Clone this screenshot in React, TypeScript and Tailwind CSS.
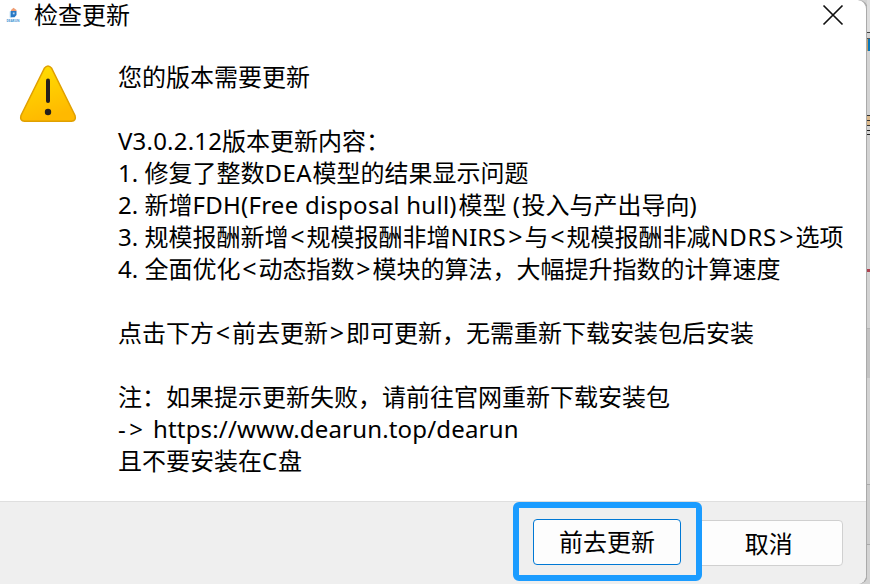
import type { ReactNode } from 'react';

const Latin = ({ w, children }: { w: string; children: ReactNode }) => (
  <span className={`inline-block whitespace-pre ${w}`}>{children}</span>
);

const Line = ({ children }: { children?: ReactNode }) => (
  <p className="h-8 whitespace-pre leading-8">{children}</p>
);

const Lt = () => <Latin w="w-[18px] text-center text-[25px] leading-none">&lt;</Latin>;
const Gt = () => <Latin w="w-[18px] text-center text-[25px] leading-none">&gt;</Latin>;

const AppLogo = () => (
  <svg width="16" height="16" viewBox="0 0 16 16" className="shrink-0 overflow-visible">
    <path d="M3.800 4.500L5.500 3.500v7H3.800z" fill="#8cc4ec" />
    <path d="M5 3L7.500.8l3 2.200v1H5z" fill="#ef9d73" />
    <path d="M5 4h5.500v4L8.500 10.300H5z" fill="#2878c4" />
    <path d="M6.800 5.500h1.800v1.800H6.800z" fill="#b9daf4" />
    <text x="0.500" y="15" textLength="13" lengthAdjust="spacingAndGlyphs" fontSize="4.200" fontWeight="700" fill="#3d91d2">DEARUN</text>
  </svg>
);

const WarningIcon = () => (
  <svg width="58" height="58" viewBox="0 0 58 58" className="block">
    <defs>
      <linearGradient id="warn" x1="0" y1="0" x2="0.3" y2="1">
        <stop offset="0" stopColor="#ffe100" />
        <stop offset="1" stopColor="#ffb900" />
      </linearGradient>
    </defs>
    <path d="M25.300 3.300Q29 -1.200 32.700 3.300L56 50.500Q57.500 56 52.500 56.300H5.500Q.5 56 2 50.500Z" fill="url(#warn)" stroke="#e0a000" strokeWidth="1.500" />
    <path d="M29 15.500V36" stroke="#241f1c" strokeWidth="4" strokeLinecap="round" />
    <circle cx="29" cy="47" r="3.200" fill="#241f1c" />
  </svg>
);

const Backdrop = () => (
  <div className="flex w-[3px] shrink-0 flex-col bg-[#d3d3d3]">
    <div className="h-8 bg-[#dedede]" />
    <div className="h-px bg-[#444]" />
    <div className="h-[5px]" />
    <div className="h-px bg-[#555]" />
    <div className="h-3 border-l border-[#c29a63] bg-[#0877b9]" />
    <div className="h-[64px]" />
    <div className="flex h-[11px] flex-col justify-center border-y border-[#333] bg-[#dbb98c]"><div className="h-px bg-[#333]" /></div>
    <div className="h-1" />
    <div className="h-px bg-[#222]" />
    <div className="h-[3px]" />
    <div className="h-px bg-[#222]" />
    <div className="h-[134px]" />
    <div className="h-[3px] bg-[#ad4250]" />
    <div className="h-[56px]" />
    <div className="h-px bg-[#b5b5b5]" />
    <div className="h-[49px] bg-[#c3c3c3]" />
    <div className="h-[106px]" />
    <div className="h-px bg-[#aaa]" />
    <div className="h-[59px] bg-[#cdcdcd]" />
    <div className="h-px bg-[#aaa]" />
  </div>
);

export default function App() {
  return (
    <div className="flex h-[584px] w-[870px] overflow-hidden bg-[#d3d3d3] font-['Noto_Sans','Noto_Sans_CJK_SC',sans-serif] text-2xl text-black">
      <div className="flex w-[867px] shrink-0 flex-col overflow-hidden rounded-r-[9px] border-r border-[#aaa] bg-white shadow-[1px_0_0_#aaa]">
        <header className="flex h-[30px] shrink-0 items-center pl-[6px] pr-[22px]">
          <AppLogo />
          <h1 className="ml-3 flex-1 leading-[30px]">检查更新</h1>
          <svg width="22" height="22" viewBox="0 0 22 22"><path d="M1.500 1.500l19 19M20.500 1.500l-19 19" stroke="#111" strokeWidth="1.700" /></svg>
        </header>
        <main className="flex h-[471px] shrink-0 pt-[31px]">
          <div className="w-[118px] shrink-0 pl-[19px] pt-[4px]"><WarningIcon /></div>
          <div>
            <Line>您的版本需要更新</Line>
            <Line />
            <Line><Latin w="w-[104px] tracking-[0.2px]">V3.0.2.12</Latin>版本更新内容：</Line>
            <Line><Latin w="w-[26.500px]">1. </Latin>修复了整数<Latin w="w-[48px] tracking-[0.5px]">DEA</Latin>模型的结果显示问题</Line>
            <Line><Latin w="w-[26.500px]">2. </Latin>新增<Latin w="w-[266px] tracking-[0.25px]">FDH(Free disposal hull)</Latin>模型<Latin w="w-[15px]"> (</Latin>投入与产出导向)</Line>
            <Line><Latin w="w-[26.500px]">3. </Latin>规模报酬新增<Lt />规模报酬非增<Latin w="w-[56px] tracking-[0.2px]">NIRS</Latin><Gt />与<Lt />规模报酬非减<Latin w="w-[67px] tracking-[0.6px]">NDRS</Latin><Gt />选项</Line>
            <Line><Latin w="w-[26.500px]">4. </Latin>全面优化<Lt />动态指数<Gt />模块的算法，大幅提升指数的计算速度</Line>
            <Line />
            <Line>点击下方<Lt />前去更新<Gt />即可更新，无需重新下载安装包后安装</Line>
            <Line />
            <Line>注：如果提示更新失败，请前往官网重新下载安装包</Line>
            <Line><Latin w="w-[35px] tracking-[3.500px]">-&gt;</Latin><span className="tracking-[0.17px]">https://www.dearun.top/dearun</span></Line>
            <Line>且不要安装在<Latin w="w-[16px]">C</Latin>盘</Line>
          </div>
        </main>
        <footer className="flex flex-1 items-start border-t border-[#dfdfdf] bg-[#efefef] pl-[512.500px]">
          <div className="z-10 flex h-[79px] w-[189px] shrink-0 items-center justify-center rounded-md border-[6px] border-[#1b9cff] pt-px">
            <button className="h-[46px] w-[148px] rounded border border-[#0078d4] bg-[#fdfdfd]">前去更新</button>
          </div>
          <button className="-ml-1 mt-[18px] h-[46px] w-[145.500px] rounded-r border border-[#d0d0d0] bg-[#fdfdfd] pr-[3px] pt-px">取消</button>
        </footer>
      </div>
      <Backdrop />
    </div>
  );
}
